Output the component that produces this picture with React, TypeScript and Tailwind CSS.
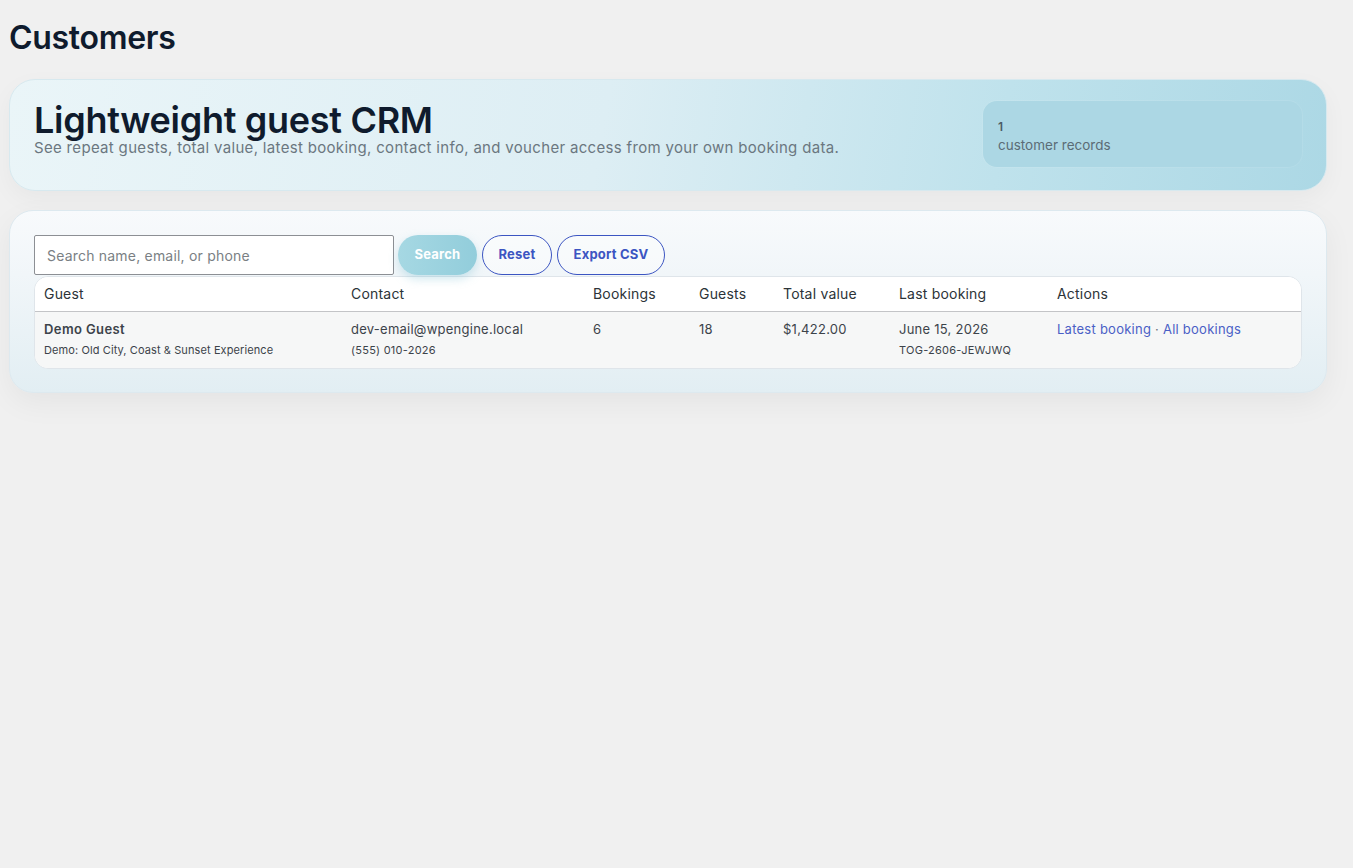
import React from "react";

const font = { fontFamily: "Inter, 'Noto Sans', sans-serif" };

function StatBox() {
  return (
    <div className="w-[319px] h-[66px] rounded-[14px] bg-[#acd7e4] px-[15px] pt-[18px] shadow-[0_0_0_1px_rgba(255,255,255,0.08)]">
      <div className="text-[12px] leading-[16px] font-semibold text-[#4b5c66]">1</div>
      <div className="text-[13.5px] leading-[20px] text-[#5b6c76]">customer records</div>
    </div>
  );
}

function Hero() {
  return (
    <section className="h-[112px] rounded-[26px] border border-[#d7e9ef] bg-[linear-gradient(100deg,#eaf5f8_0%,#ddeef4_45%,#bfe2ec_75%,#acd8e5_100%)] shadow-[0_8px_24px_rgba(0,0,0,0.04)] flex items-start justify-between pl-[24px] pr-[24px] pt-[21px]">
      <div>
        <h2 className="text-[36px] leading-[38px] font-semibold text-[#0f1b2d] tracking-[-0.3px]">
          Lightweight guest CRM
        </h2>
        <p className="text-[15px] leading-[18px] text-[#6b7780] tracking-[0.32px]">
          See repeat guests, total value, latest booking, contact info, and voucher access from your own booking data.
        </p>
      </div>
      <StatBox />
    </section>
  );
}

function Toolbar() {
  return (
    <div className="flex items-center gap-[4px]">
      <div className="w-[360px] h-[40px] border border-[#8c8f94] rounded-[2px] bg-white flex items-center px-[12px]">
        <span className="text-[14px] text-[#7a7f84] tracking-[0.2px]">Search name, email, or phone</span>
      </div>
      <button className="h-[40px] w-[79px] rounded-full bg-[linear-gradient(90deg,#a6d8e3,#92cddb)] text-white text-[13px] font-bold shadow-[0_4px_10px_rgba(120,190,210,0.35)] tracking-[0.2px]">
        Search
      </button>
      <button className="ml-[1px] h-[40px] w-[70px] rounded-full border border-[#3c55c2] bg-white/40 text-[#3c55c2] text-[13px] font-bold tracking-[0.2px]">
        Reset
      </button>
      <button className="ml-[1px] h-[40px] w-[108px] rounded-full border border-[#3c55c2] bg-white/40 text-[#3c55c2] text-[13px] font-bold tracking-[0.2px]">
        Export CSV
      </button>
    </div>
  );
}

const cols = ["w-[307px]", "w-[242px]", "w-[106px]", "w-[84px]", "w-[116px]", "w-[158px]", "flex-1"];

function Table() {
  const headers = ["Guest", "Contact", "Bookings", "Guests", "Total value", "Last booking", "Actions"];
  return (
    <div className="mt-[1px] rounded-[14px] border border-[#dfe5ea] overflow-hidden bg-white">
      <div className="flex h-[35px] items-center border-b border-[#c3c4c7] bg-white">
        {headers.map((h, i) => (
          <div key={h} className={`${cols[i]} pl-[9px] text-[14px] text-[#2c3338] tracking-[0.2px] -mt-[1px]`}>
            {h}
          </div>
        ))}
      </div>
      <div className="flex h-[56px] bg-[#f6f7f7] pt-[8px] text-[13px] text-[#3c434a] tracking-[0.25px]">
        <div className={`${cols[0]} pl-[9px]`}>
          <div className="font-semibold leading-[18px] tracking-[0.4px]">Demo Guest</div>
          <div className="text-[11px] leading-[24px] tracking-[0.1px]">Demo: Old City, Coast &amp; Sunset Experience</div>
        </div>
        <div className={`${cols[1]} pl-[9px]`}>
          <div className="leading-[18px]">dev-email@wpengine.local</div>
          <div className="text-[11px] leading-[24px]">(555) 010-2026</div>
        </div>
        <div className={`${cols[2]} pl-[9px] leading-[18px]`}>6</div>
        <div className={`${cols[3]} pl-[9px] leading-[18px]`}>18</div>
        <div className={`${cols[4]} pl-[9px] leading-[18px]`}>$1,422.00</div>
        <div className={`${cols[5]} pl-[9px]`}>
          <div className="leading-[18px]">June 15, 2026</div>
          <div className="text-[11px] leading-[24px]">TOG-2606-JEWJWQ</div>
        </div>
        <div className={`${cols[6]} pl-[9px] leading-[18px]`}>
          <a className="text-[#4a5fc6]">Latest booking</a>
          <span className="text-[#6b7280]"> · </span>
          <a className="text-[#4a5fc6]">All bookings</a>
        </div>
      </div>
    </div>
  );
}

export default function App() {
  return (
    <div className="min-h-[868px] bg-[#f0f0f0] pl-[9px] pr-[26px] pt-[19px]" style={font}>
      <h1 className="text-[32px] leading-[38px] font-semibold text-[#0f1b2d] tracking-[-0.3px]">Customers</h1>
      <div className="mt-[22px]">
        <Hero />
      </div>
      <section className="mt-[19px] h-[183px] rounded-[24px] border border-[#dde9ef] bg-[linear-gradient(180deg,#f8fafc_0%,#f1f6f9_35%,#e2eef3_100%)] shadow-[0_10px_30px_rgba(0,0,0,0.05)] px-[24px] pt-[24px]">
        <Toolbar />
        <Table />
      </section>
    </div>
  );
}
